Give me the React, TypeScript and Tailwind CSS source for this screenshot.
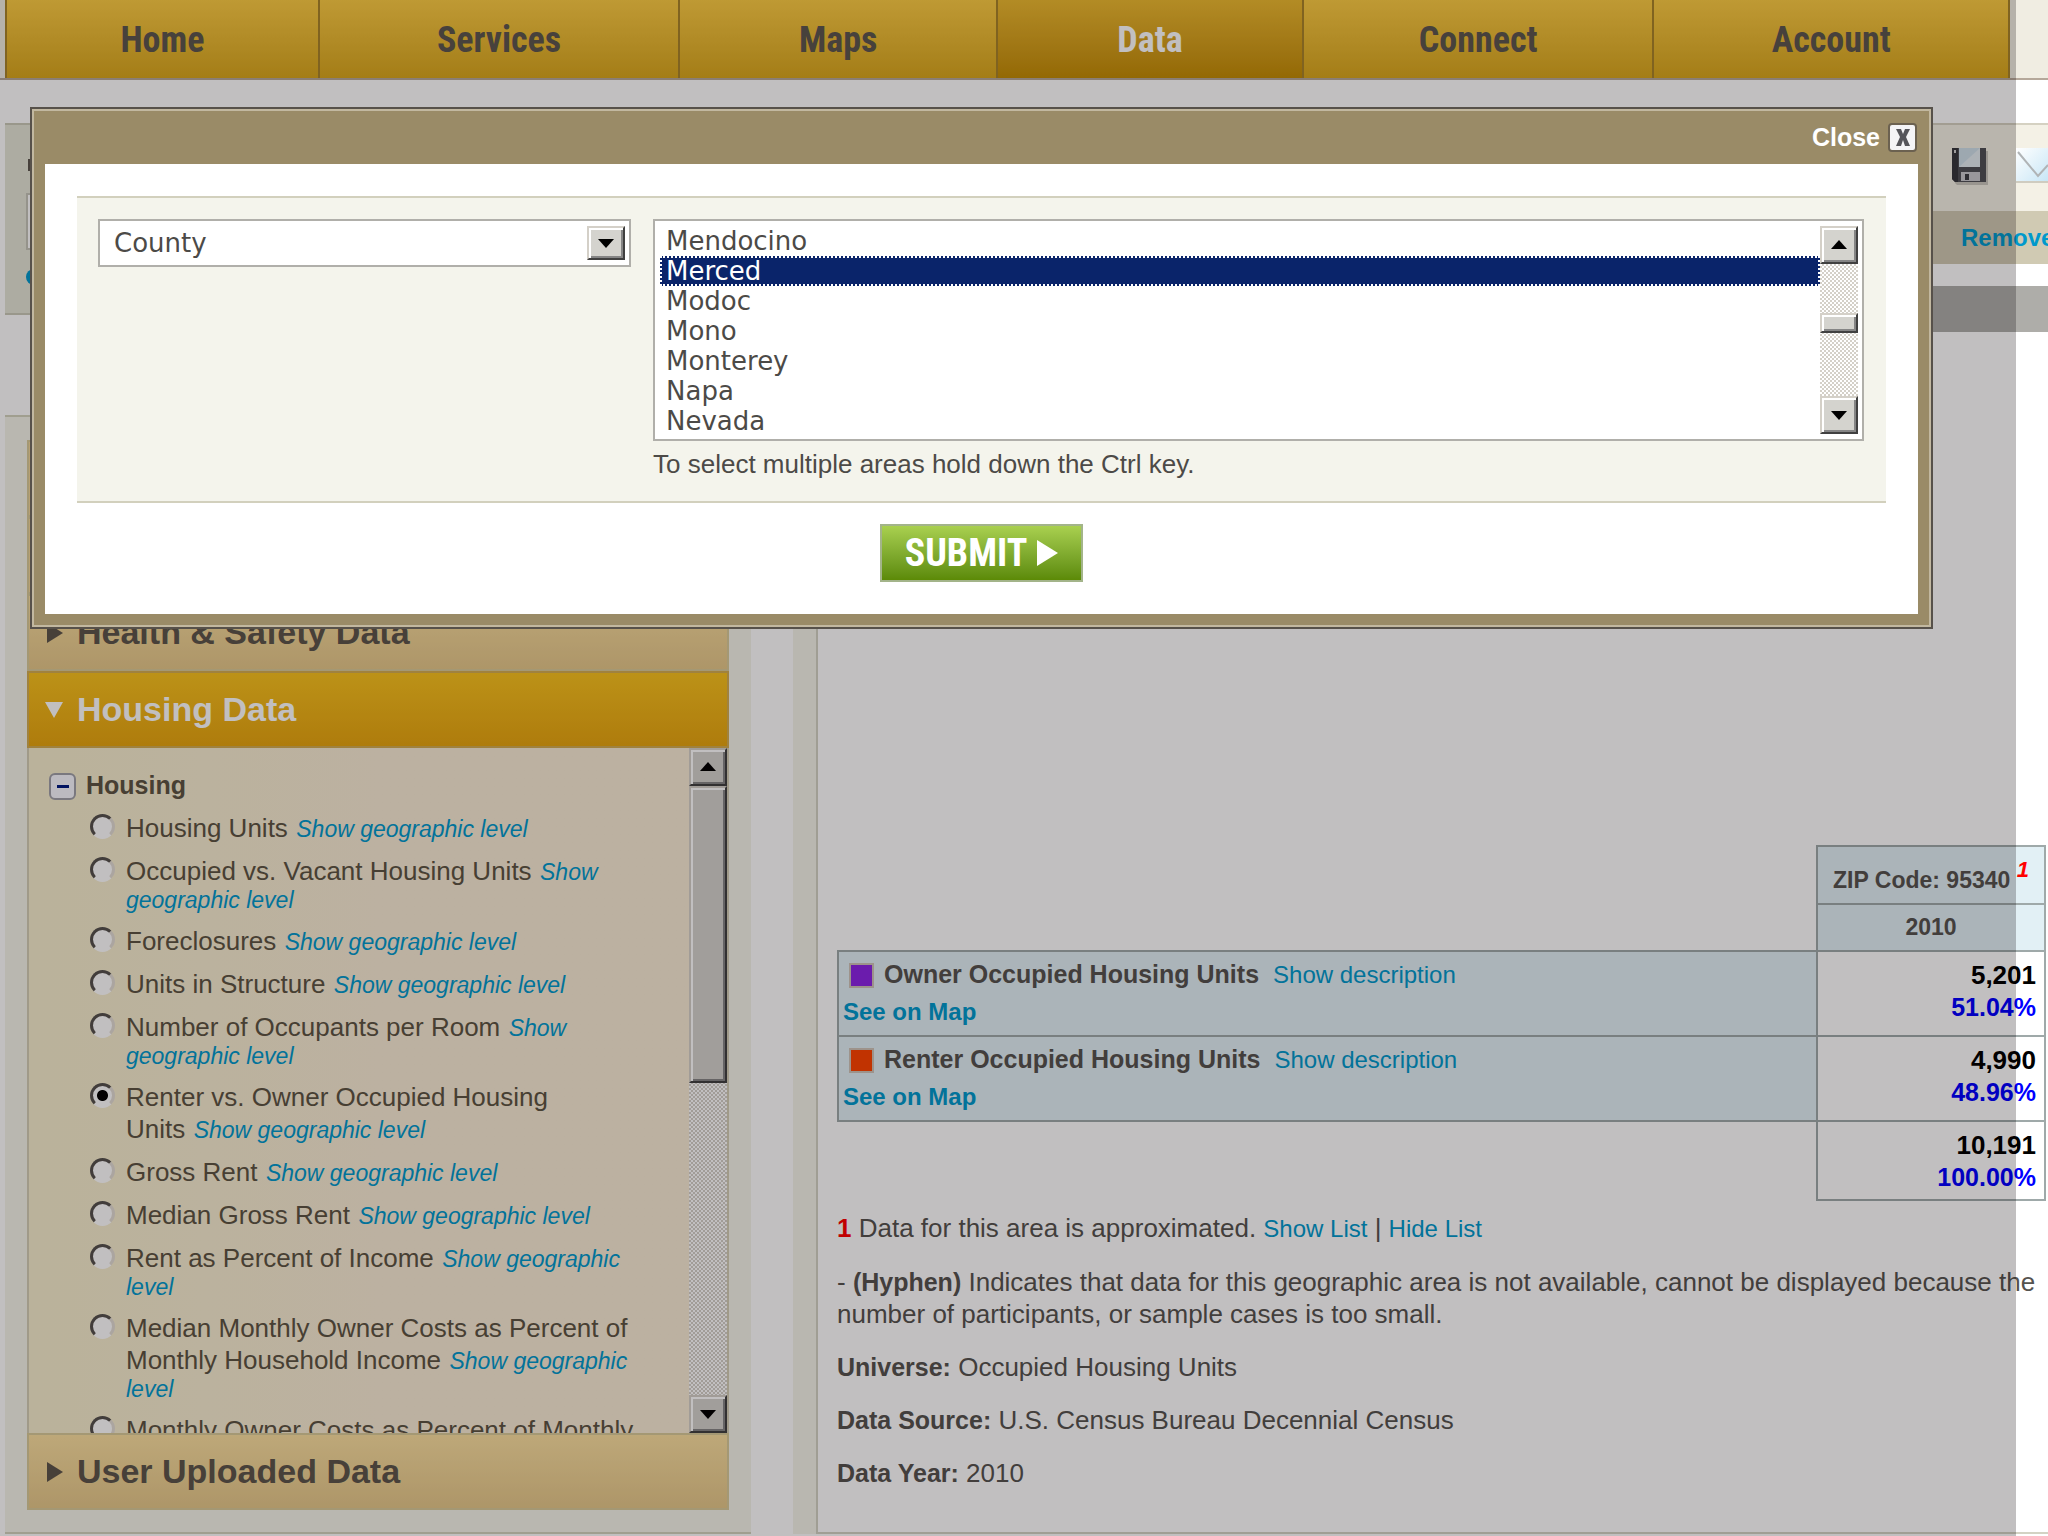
import type { ReactNode } from 'react';
import { clsx } from 'clsx';

// ── Content ──────────────────────────────────────────────────────────────────

const TABS = [
  { label: 'Home', grow: 'flex-[313]' },
  { label: 'Services', grow: 'flex-[361]' },
  { label: 'Maps', grow: 'flex-[318]' },
  { label: 'Data', grow: 'flex-[306]', active: true },
  { label: 'Connect', grow: 'flex-[351]' },
  { label: 'Account', grow: 'flex-[356]' },
];

const COUNTIES = ['Mendocino', 'Merced', 'Modoc', 'Mono', 'Monterey', 'Napa', 'Nevada'];

const INDICATORS: { id: string; label: ReactNode }[] = [
  { id: 'units', label: 'Housing Units' },
  { id: 'vacant', label: 'Occupied vs. Vacant Housing Units' },
  { id: 'foreclosures', label: 'Foreclosures' },
  { id: 'structure', label: 'Units in Structure' },
  { id: 'occupants', label: 'Number of Occupants per Room' },
  {
    id: 'tenure',
    label: (
      <>
        Renter vs. Owner Occupied Housing
        <br />
        Units
      </>
    ),
  },
  { id: 'gross', label: 'Gross Rent' },
  { id: 'median', label: 'Median Gross Rent' },
  { id: 'rent-income', label: 'Rent as Percent of Income' },
  {
    id: 'owner-median',
    label: 'Median Monthly Owner Costs as Percent of Monthly Household Income',
  },
  { id: 'owner-costs', label: 'Monthly Owner Costs as Percent of Monthly' },
];

const ROWS = [
  { label: 'Owner Occupied Housing Units', swatch: 'bg-[#8c26e6]', count: '5,201', share: '51.04%' },
  { label: 'Renter Occupied Housing Units', swatch: 'bg-[#ff4400]', count: '4,990', share: '48.96%' },
];

// ── Small parts ──────────────────────────────────────────────────────────────

function Arrow({ dir }: { dir: 'up' | 'down' }) {
  return (
    <svg width="16" height="10" viewBox="0 0 16 10" aria-hidden="true">
      <path d={dir === 'up' ? 'M8 0 16 9H0Z' : 'M0 1h16L8 10Z'} fill="#000" />
    </svg>
  );
}

const BEVEL =
  'border-2 border-t-[#d4d0c8] border-l-[#d4d0c8] border-r-[#404040] border-b-[#404040] bg-[#d4d3ce] shadow-[inset_2px_2px_#fff,inset_-2px_-2px_#858585]';

function ScrollBar({ thumb }: { thumb: ReactNode }) {
  return (
    <div className="flex w-[38px] shrink-0 flex-col bg-[conic-gradient(#fff_25%,#d4d0c8_0_50%,#fff_0_75%,#d4d0c8_0)] bg-[length:4px_4px]">
      <button type="button" aria-label="Scroll up" className={clsx(BEVEL, 'flex h-[38px] items-center justify-center')}>
        <Arrow dir="up" />
      </button>
      <div className="flex-1">{thumb}</div>
      <button type="button" aria-label="Scroll down" className={clsx(BEVEL, 'flex h-[38px] items-center justify-center')}>
        <Arrow dir="down" />
      </button>
    </div>
  );
}

function Link({ className, children }: { className?: string; children: ReactNode }) {
  return (
    <a href="#" className={clsx('text-[#0099cc]', className)}>
      {children}
    </a>
  );
}

function SaveIcon() {
  return (
    <svg width="36" height="37" viewBox="0 0 36 37" aria-hidden="true">
      <path d="M3 3h33v34H5l-2-2Z" fill="#c9c7bd" />
      <path d="M0 0h34v34H3l-3-3Z" fill="#4f5055" />
      <path d="M0 0h6v34H3l-3-3Z" fill="#36373c" />
      <path d="M7 0h21v19H7Z" fill="#cfe0ea" />
      <path d="M7 19 28 0v19Z" fill="#e4edf2" />
      <path d="M9 24h19v9H9Z" fill="#c9c9cd" />
      <path d="M13 26h4v6h-4Z" fill="#3b3c41" />
      <path d="M2 2h2v3H2Z" fill="#d0d0d0" />
    </svg>
  );
}

function MailIcon() {
  return (
    <svg width="34" height="36" viewBox="0 0 34 36" aria-hidden="true">
      <defs>
        <linearGradient id="mail" x1="0" y1="0" x2="1" y2="1">
          <stop offset="0" stopColor="#fff" />
          <stop offset="1" stopColor="#c8e6f6" />
        </linearGradient>
      </defs>
      <path d="M2 0h32v33H2Z" fill="url(#mail)" />
      <path d="M2 33h32v2H2Z" fill="#cfccc0" />
      <path d="M4 4 24 28 34 17" fill="none" stroke="#b0b4b6" strokeWidth="2" />
    </svg>
  );
}

function AccordionHeader({ open, children }: { open?: boolean; children: ReactNode }) {
  return (
    <button
      type="button"
      aria-expanded={!!open}
      className={clsx(
        'flex h-[77px] w-full items-center gap-3.5 border-2 pl-4 text-left text-[34px] font-bold',
        open
          ? 'border-[#d3ae52] bg-linear-to-b from-[#f8c31e] to-[#e6a50f] text-white'
          : 'border-[#d8cb9a] bg-linear-to-b from-[#fae0a0] to-[#e5c88a] text-[#5c554b]',
      )}
    >
      <svg width="18" height="20" viewBox="0 0 18 20" aria-hidden="true">
        <path d={open ? 'M0 2h18L9 18Z' : 'M2 0 18 10 2 20Z'} fill="currentColor" />
      </svg>
      {children}
    </button>
  );
}

// ── Page regions ─────────────────────────────────────────────────────────────

function TopNav() {
  return (
    <nav className="flex h-20 border-b-2 border-[#b5a89a] bg-[#f0ede2] pr-[38px] pl-[5px] font-['Liberation_Sans_Narrow','Roboto_Condensed','Liberation_Sans',sans-serif]">
      {TABS.map((tab) => (
        <a
          key={tab.label}
          href="#"
          className={clsx(
            'flex min-w-0 items-center justify-center border-l-2 border-[#a8842a] pt-0.5 text-[36px] font-bold last:border-r-2',
            tab.grow,
            tab.active
              ? 'bg-linear-to-b from-[#ecba30] to-[#c28c03] text-white'
              : 'bg-linear-to-b from-[#fccd44] to-[#d8a71c] text-[#5c574f]',
          )}
        >
          {tab.label}
        </a>
      ))}
    </nav>
  );
}

function ToolRow() {
  return (
    <div className="mt-[43px] flex h-[292px] items-start">
      <div className="ml-[5px] h-[192px] w-[746px] shrink-0 border-y-2 border-[#c9c9b8] bg-[#e4e6d7] pt-[34px] pl-[21px]">
        <div className="ml-0.5 h-3 w-5 bg-[#5c574f]" />
        <div className="mt-[22px] h-[57px] w-[500px] border-2 border-[#c4c4b8] bg-white" />
        <div className="mt-[19px] size-4 rounded-full bg-[#0099cc]" />
      </div>
      <div className="ml-[42px] min-w-0 flex-1">
        <div className="flex h-[88px] items-start justify-end gap-[26px] border-t-2 border-[#d5d1c2] bg-[#f4f1e6] pt-[23px]">
          <SaveIcon />
          <MailIcon />
        </div>
        <div className="flex h-[53px] items-center justify-end bg-[#d0cab3]">
          <div className="w-[87px] overflow-hidden">
            <Link className="text-[24px] font-bold">Remove</Link>
          </div>
        </div>
        <div className="mt-[22px] h-[46px] bg-[#aeada9]" />
      </div>
    </div>
  );
}

function Sidebar() {
  return (
    <aside className="ml-[5px] w-[746px] shrink-0 border-y-2 border-[#d3d3bd] bg-[#f4f4ea] px-[22px] pt-[23px] pb-[22px]">
      <div className="h-[77px] border-2 border-[#d8cb9a] bg-[#f3d798]" />
      <div className="h-[77px] border-2 border-[#d8cb9a] bg-[#f3d798]" />
      <AccordionHeader>Health &amp; Safety Data</AccordionHeader>
      <AccordionHeader open>Housing Data</AccordionHeader>
      <div className="flex h-[685px] border-x-2 border-[#d3cdb5] bg-linear-to-r from-[#f6eecd] to-[#f8ecd5] to-50%">
        <div className="min-w-0 flex-1 overflow-hidden pt-5 pl-5">
          <div className="flex h-[36px] items-center gap-2.5">
            <button
              type="button"
              aria-label="Collapse Housing"
              className="flex size-[27px] items-center justify-center rounded-md border-2 border-[#a0a0a8] bg-[#f8f8ff]"
            >
              <span className="h-[3px] w-3 bg-[#001a80]" />
            </button>
            <span className="text-[25px] font-bold text-[#5c5443]">Housing</span>
          </div>
          <ul className="mt-2 w-[587px] pl-[41px]">
            {INDICATORS.map((item) => (
              <li key={item.id} className="mb-[11px] flex items-start gap-[11px] text-[23px] leading-[27px]">
                <input
                  type="radio"
                  name="indicator"
                  id={item.id}
                  defaultChecked={item.id === 'tenure'}
                  className="mt-0.5 size-[25px] shrink-0 appearance-none rounded-full border-[3px] border-t-[#55524e] border-r-[#e2dcd4] border-b-[#fff] border-l-[#55524e] bg-white checked:bg-[radial-gradient(circle,#000_5px,transparent_6px)]"
                />
                <div className="min-w-0">
                  <label htmlFor={item.id} className="mr-0.5 text-[26px] leading-[32px] text-[#5c5443]">
                    {item.label}
                  </label>{' '}
                  {item.id !== 'owner-costs' && <Link className="italic">Show geographic level</Link>}
                </div>
              </li>
            ))}
          </ul>
        </div>
        <ScrollBar thumb={<div className={clsx(BEVEL, 'h-[297px]')} />} />
      </div>
      <AccordionHeader>User Uploaded Data</AccordionHeader>
    </aside>
  );
}

function ResultsTable() {
  return (
    <table className="w-full border-collapse text-[#55534f]">
      <thead className="text-[23px]">
        <tr className="h-[58px]">
          <td rowSpan={2} />
          <th className="w-[228px] border-2 border-[#9fa9a9] bg-[#e2f0f5] px-2 pt-2.5 leading-[28px] whitespace-nowrap">
            ZIP Code: 95340 <sup className="text-[22px] text-[#ff0000] italic">1</sup>
          </th>
        </tr>
        <tr className="h-[47px]">
          <th className="border-2 border-[#9fa9a9] bg-[#e2f0f5]">2010</th>
        </tr>
      </thead>
      <tbody>
        {ROWS.map((row) => (
          <tr key={row.label} className="h-[85px]">
            <th className="border-2 border-[#9fa9a9] bg-[#e2f0f5] pl-1 text-left">
              <div className="flex h-9 items-center">
                <span className={clsx('mr-2.5 ml-1.5 size-[25px] border-2 border-[#cfc4b8]', row.swatch)} />
                <span className="mr-3.5 text-[25px]">{row.label}</span>
                <Link className="text-[24px] font-normal">Show description</Link>
              </div>
              <Link className="block h-[37px] text-[24px] leading-[37px]">See on Map</Link>
            </th>
            <td className="border-2 border-[#9fa9a9] pr-2 pb-1.5 text-right text-[26px] leading-[32px] font-bold text-black">
              {row.count}
              <div className="text-[25px] text-[#0000ff]">{row.share}</div>
            </td>
          </tr>
        ))}
        <tr className="h-[79px]">
          <td />
          <td className="border-2 border-[#9fa9a9] pr-2 text-right text-[26px] leading-[32px] font-bold text-black">
            10,191
            <div className="text-[25px] text-[#0000ff]">100.00%</div>
          </td>
        </tr>
      </tbody>
    </table>
  );
}

function Results() {
  return (
    <section className="ml-[42px] flex min-w-0 flex-1 bg-[#f4f4ea] pl-[23px]">
      <div className="min-w-0 flex-1 border-b-2 border-l-2 border-[#d3d3c4] bg-white pt-[430px] pl-[19px]">
        <div className="pr-[2px]">
          <ResultsTable />
        </div>
        <div className="mt-[11px] space-y-[21px] text-[26px] leading-[32px] text-[#55534f]">
          <p>
            <b className="text-[#ff0000]">1</b> Data for this area is approximated.{' '}
            <Link className="text-[24px]">Show List</Link> | <Link className="text-[24px]">Hide List</Link>
          </p>
          <p>
            - <b className="text-[25px]">(Hyphen)</b> Indicates that data for this geographic area is not available, cannot be
            displayed because the
            <br />
            number of participants, or sample cases is too small.
          </p>
          <p>
            <b className="text-[25px]">Universe:</b> Occupied Housing Units
          </p>
          <p>
            <b className="text-[25px]">Data Source:</b> U.S. Census Bureau Decennial Census
          </p>
          <p>
            <b className="text-[25px]">Data Year:</b> 2010
          </p>
        </div>
      </div>
    </section>
  );
}

function AreaDialog() {
  return (
    <div
      role="dialog"
      aria-label="Select areas"
      className="absolute top-[107px] right-[115px] left-[30px] border-2 border-[#57514a]"
    >
      <div className="border-2 border-[#c2b8a0] bg-[#9a8b67] px-[11px] pb-[11px]">
        <div className="flex h-[53px] items-center justify-end">
          <button type="button" className="flex items-center gap-2 text-[25px] font-bold text-white">
            Close
            <svg width="30" height="30" viewBox="0 0 30 30" aria-hidden="true">
              <rect x="1" y="1" width="27" height="27" rx="3" fill="#f4f4f6" stroke="#6b6150" strokeWidth="2" />
              <path d="M8 6h5l2 5 2-5h5l-4 8 4 9h-5l-2-6-2 6H8l4-9Z" fill="#55555a" />
            </svg>
          </button>
        </div>
        <form className="bg-white px-8 pt-8 pb-8" onSubmit={(e) => e.preventDefault()}>
          <div className="flex h-[307px] items-start gap-[22px] border-y-2 border-[#d2d0bd] bg-[#f4f4ec] pt-[21px] pr-[22px] pl-[21px] text-[26px] text-[#4c4a47]">
            <div className="flex h-[48px] w-[533px] shrink-0 items-center border-2 border-[#b0afaa] bg-white pr-1">
              <select
                aria-label="Area type"
                className="h-full min-w-0 flex-1 appearance-none pl-3.5 font-['DejaVu_Sans',sans-serif] outline-none"
              >
                <option>County</option>
              </select>
              <span className={clsx(BEVEL, 'flex h-[34px] w-[38px] items-center justify-center')}>
                <Arrow dir="down" />
              </span>
            </div>
            <div className="min-w-0 flex-1">
              <div className="flex h-[222px] border-2 border-[#b0afaa] bg-white py-[5px] pr-1 pl-[5px]">
                <select
                  multiple
                  size={7}
                  aria-label="Counties"
                  defaultValue={['Merced']}
                  className="h-[210px] min-w-0 flex-1 appearance-none overflow-hidden border-0 p-0 font-['DejaVu_Sans',sans-serif] outline-none"
                >
                  {COUNTIES.map((name) => (
                    <option
                      key={name}
                      className="h-[30px] min-h-0 p-0 pl-1.5 checked:bg-[linear-gradient(#0a246a,#0a246a)] checked:outline-2 checked:-outline-offset-2 checked:outline-white checked:outline-dotted checked:[-webkit-text-fill-color:#fff]"
                    >
                      {name}
                    </option>
                  ))}
                </select>
                <ScrollBar thumb={<div className={clsx(BEVEL, 'mt-[49px] h-5')} />} />
              </div>
              <p className="mt-[7px] leading-[32px]">To select multiple areas hold down the Ctrl key.</p>
            </div>
          </div>
          <div className="mt-[21px] flex justify-center">
            <button
              type="submit"
              className="flex h-[58px] w-[203px] items-center justify-center gap-2.5 border-2 border-[#a3b48a] bg-linear-to-b from-[#a9d04f] to-[#5c8a06] font-['Liberation_Sans_Narrow','Roboto_Condensed','Liberation_Sans',sans-serif] text-[38px] font-bold text-white"
            >
              SUBMIT
              <svg width="21" height="26" viewBox="0 0 21 26" aria-hidden="true">
                <path d="M0 0 21 13 0 26Z" fill="#fff" />
              </svg>
            </button>
          </div>
        </form>
      </div>
    </div>
  );
}

export default function App() {
  return (
    <div className="relative min-h-screen overflow-hidden bg-white font-['Liberation_Sans',Arial,sans-serif]">
      <TopNav />
      <ToolRow />
      <div className="flex items-stretch">
        <Sidebar />
        <Results />
      </div>
      {/* The shade stops short of the window's right edge */}
      <div className="absolute inset-y-0 right-8 left-0 bg-[#060003]/25" />
      <AreaDialog />
    </div>
  );
}
